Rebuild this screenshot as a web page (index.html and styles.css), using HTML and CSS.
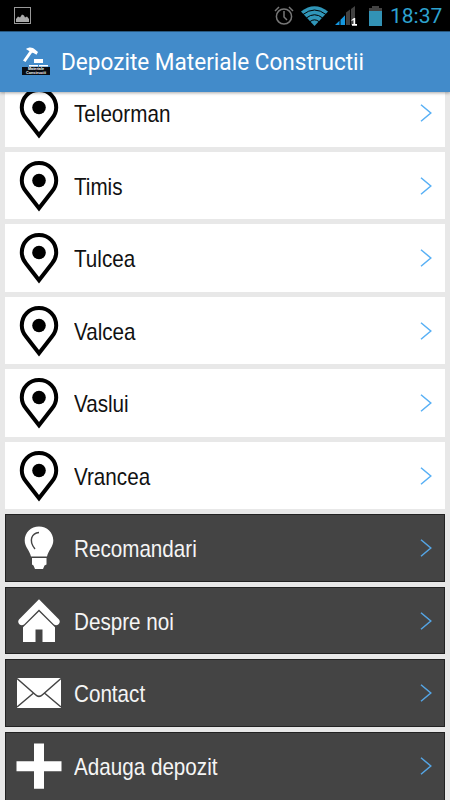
FILE: index.html
```html
<!DOCTYPE html>
<html lang="ro">
<head>
<meta charset="utf-8">
<title>Depozite Materiale Constructii</title>
<link rel="stylesheet" href="styles.css">
</head>
<body>
<svg class="defs" aria-hidden="true">
  <symbol id="pin" viewBox="0 0 44 52"><path d="M22 3C12 3 4.800 10.700 4.800 20.500c0 4.500 1.500 7.700 4.200 11L22 48.200l13-16.700c2.700-3.300 4.200-6.500 4.200-11C39.200 10.700 32 3 22 3z" fill="none" stroke="#000" stroke-width="4"/><circle cx="22" cy="20.500" r="6.800"/></symbol>
  <symbol id="chevron" viewBox="0 0 12 18"><path d="M1 .7l9.800 8.300L1 17.300" fill="none" stroke="currentColor" stroke-width="1.500"/></symbol>
</svg>
<div class="phone">
  <div class="status">
    <svg class="picture" width="17" height="17" viewBox="0 0 17 17"><rect x=".5" y=".5" width="16" height="16" fill="none" stroke="#999"/><path d="M2 15v-3l2-2.500 2 1 2-3 2 1 1 2 2-1 2 2.500v3z" fill="#aaa"/></svg>
    <svg class="alarm" width="20" height="20" viewBox="0 0 20 20" fill="none" stroke="#777" stroke-width="1.500"><circle cx="10" cy="10.500" r="7.600"/><path d="M10 5v6l3 3M1 5l4-4M19 5l-4-4"/></svg>
    <svg class="wifi" width="27" height="20" viewBox="0 0 27 20"><path d="M0 5.500Q13.500-5 27 5.500L13.500 20z" fill="#3096b8"/><path d="M2 8.500Q13.500-.5 25 8.500M5.300 12Q13.500 5.500 21.700 12M8.800 15.700Q13.500 12 18.200 15.700" fill="none" stroke="#000" stroke-width="1"/></svg>
    <svg class="signal" width="22" height="20" viewBox="0 0 22 20"><path d="M0 19l4.500-4.300V19zM5.500 13.700l4.500-4.500V19H5.500z" fill="#1597e0"/><path d="M11 6.500l4-3V19h-4zM16 3l4-3v19h-4z" fill="#424242"/><path d="M16.500 14l2.500-2h1.200v6H22v1.800h-5V18h1.500v-4l-2 1z" fill="#fff"/></svg>
    <svg class="battery" width="13" height="20" viewBox="0 0 13 20"><path d="M3 0h7v2h3v4H0V2h3z" fill="#444"/><path d="M0 5h13v15H0z" fill="#3292b5"/></svg>
    <span class="clock">18:37</span>
  </div>
  <header class="bar">
    <svg class="logo" width="30" height="30" viewBox="0 0 30 30"><path d="M5 2C8-.5 12 .2 14 2.500l3 2.500-1.500 2.800-3-1.800-1.500-.3L4.500 15 2 13.500 8.500 4.300z" fill="#fff"/><path d="M13 12h9v4h-9zM8 18h9v1.500H8zM18 18h9v1.500h-9z" fill="#fff"/><path d="M1 20h28v8H1z" fill="#080c12"/><text x="7" y="23.300" textLength="16" lengthAdjust="spacingAndGlyphs" class="logo-text">Materiale</text><text x="5" y="27.300" textLength="20" lengthAdjust="spacingAndGlyphs" class="logo-text">Constructii</text></svg>
    <h1 class="title">Depozite Materiale Constructii</h1>
  </header>
  <main class="viewport">
    <ul class="list">
      <li class="row"><svg class="icon"><use href="#pin"/></svg><span class="label">Teleorman</span><svg class="chevron"><use href="#chevron"/></svg></li>
      <li class="row"><svg class="icon"><use href="#pin"/></svg><span class="label">Timis</span><svg class="chevron"><use href="#chevron"/></svg></li>
      <li class="row"><svg class="icon"><use href="#pin"/></svg><span class="label">Tulcea</span><svg class="chevron"><use href="#chevron"/></svg></li>
      <li class="row"><svg class="icon"><use href="#pin"/></svg><span class="label">Valcea</span><svg class="chevron"><use href="#chevron"/></svg></li>
      <li class="row"><svg class="icon"><use href="#pin"/></svg><span class="label">Vaslui</span><svg class="chevron"><use href="#chevron"/></svg></li>
      <li class="row"><svg class="icon"><use href="#pin"/></svg><span class="label">Vrancea</span><svg class="chevron"><use href="#chevron"/></svg></li>
      <li class="row dark"><svg class="icon" viewBox="0 0 44 52"><path d="M22 4.500c8 0 14.300 6 14.300 14 0 6.500-4.800 9.500-6.300 16H14C12.500 28 7.700 25 7.700 18.500c0-8 6.300-14 14.300-14z" fill="#fff"/><path d="M15 36h14.500v6.500l-2 1-1.500 3.500h-8l-1.500-3.500-1.500-1z" fill="#fff"/><path d="M22 10.500c-7 .5-11 8-4 16.500" fill="none" stroke="#444" stroke-width="1.400"/></svg><span class="label">Recomandari</span><svg class="chevron"><use href="#chevron"/></svg></li>
      <li class="row dark"><svg class="icon" viewBox="0 0 44 52"><path d="M22 4.300L42 24.500c2.500 3-1.500 7.500-5 5L22 14.600 7 29.500c-3.500 2.500-7.500-2-5-5z" fill="#fff"/><path d="M22 16.500l16 15.700V47H25.500V34.500h-7V47H6V32.200z" fill="#fff"/></svg><span class="label">Despre noi</span><svg class="chevron"><use href="#chevron"/></svg></li>
      <li class="row dark"><svg class="icon" viewBox="0 0 44 52"><path d="M0 11h44v30H0z" fill="#fff"/><path d="M0 11.500l18.500 16.200q3.500 3.300 7 0L44 11.500M0 40l16-13.500M44 40L28 26.500" fill="none" stroke="#444" stroke-width="1.500"/></svg><span class="label">Contact</span><svg class="chevron"><use href="#chevron"/></svg></li>
      <li class="row dark"><svg class="icon" viewBox="0 0 44 52"><path d="M17 3.500h10v17.700h17.500v10H27v17.500H17V31.200H-.5v-10H17z" fill="#fff"/></svg><span class="label">Adauga depozit</span><svg class="chevron"><use href="#chevron"/></svg></li>
    </ul>
  </main>
</div>
</body>
</html>
```
FILE: styles.css
```css
* { box-sizing: border-box; }
body { margin: 0; background: #e8e8e8; }
.defs { display: none; }
.phone { display: flex; flex-direction: column; width: 450px; height: 800px; overflow: hidden; }
.status { display: flex; flex: none; align-items: center; height: 31px; padding: 0 8px 0 14px; background: #000; }
.picture { margin-right: auto; }
.alarm { margin-right: 7px; }
.wifi { margin-right: 7px; }
.signal { margin-right: 12px; }
.battery { margin-right: 8px; }
.clock { width: 52px; padding-top: 1px; color: #33b5e5; font: 21px/30px Roboto, sans-serif; white-space: nowrap; opacity: .9; }
.bar { position: relative; display: flex; flex: none; align-items: center; height: 60.500px; padding-left: 21px; background: #428bca; border-top: 1px solid #28587f; box-shadow: 0 1px 3px rgba(0, 0, 0, .35); }
.logo { flex: none; }
.logo-text { fill: #fff; font: bold 3.400px "Liberation Sans", sans-serif; }
.title { margin: 0 0 0 10px; color: #fff; font: 400 24px/60px Roboto, sans-serif; white-space: nowrap; transform: scaleX(.941); transform-origin: left; }
.viewport { flex: 1; min-height: 0; overflow: hidden; }
.list { display: flex; flex-direction: column; gap: 5px; margin: -12.300px 0 0; padding: 0 5px; list-style: none; }
.row { display: flex; align-items: center; height: 67.500px; padding: 1px 13px 0 12px; background: #fff; color: #111; }
.dark { background: #444; color: #f5f5f5; border: 1px solid #222; padding: 1px 12px 0 11px; }
.dark:last-child { height: 70px; padding-bottom: 4px; border-bottom: 0; }
.icon { flex: none; width: 44px; height: 52px; overflow: visible; }
.label { flex: 1; margin-left: 13px; padding-top: 2px; font: 24px/30px "Liberation Sans", sans-serif; white-space: nowrap; transform: scaleX(.86); transform-origin: left; }
.chevron { flex: none; width: 12px; height: 18px; color: #58b0f5; }
.dark .chevron { color: #55a5e5; }
```
